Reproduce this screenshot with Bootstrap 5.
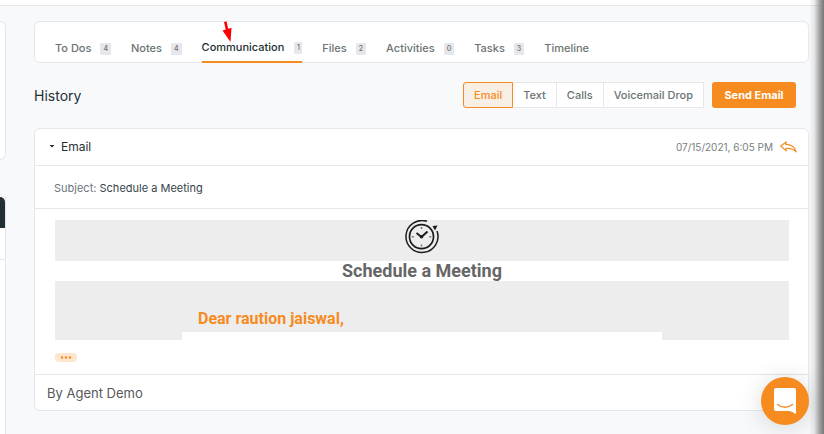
<!DOCTYPE html>
<html lang="en">
<head>
<meta charset="utf-8">
<meta name="viewport" content="width=device-width, initial-scale=1">
<title>Communication history</title>
<link href="https://cdn.jsdelivr.net/npm/bootstrap@5.3.0/dist/css/bootstrap.min.css" rel="stylesheet">
<style>
  :root { --line: #e6e7eb; --accent: #f68b1f; --ink: #1f2f34; --muted-ink: #6b7475; }
  body { font-family: Inter, "Liberation Sans", sans-serif; font-size: 11px; line-height: 16px; color: var(--ink); background: #f8f9fb; overflow: hidden; }
  .app { min-height: 100vh; }
  .topbar { height: 6px; border-bottom: 1px solid var(--line); }
  .side { width: 6px; padding-top: 15px; }
  .side-card { height: 139px; border: 1px solid var(--line); border-left: 0; border-radius: 0 6px 6px 0; }
  .side-panel { margin-top: 37px; border-right: 1px solid var(--line); }
  .side-head { height: 31px; background: #222f35; border-radius: 0 6px 0 0; }
  .side-row { height: 32px; border-bottom: 1px solid var(--line); }
  .main { margin: 0 15px 0 28px; padding-top: 15px; min-width: 0; }
  .panel { background: #fff; border: 1px solid var(--line); border-radius: 6px; }
  .tabs { height: 42px; padding-left: 20px; gap: 20px; }
  .tabs a { color: var(--muted-ink); font-weight: 500; gap: 9px; padding-bottom: 7px; margin-bottom: -1px; white-space: nowrap; }
  .tabs a.active { color: var(--ink); gap: 10px; border-bottom: 2px solid var(--accent); padding-bottom: 6px; }
  .count { min-width: 10px; height: 12px; padding: 0 3px; font-size: 7px; line-height: 12px; background: #e6e7eb; border-radius: 1px; color: var(--muted-ink); margin-top: 3px; }
  .active .count { padding: 0 2px; min-width: 8px; }
  .actions { margin-top: 19px; padding-right: 13px; }
  .title { font-size: 14px; line-height: 20px; font-weight: 400; padding-top: 1px; }
  .seg .btn, .send { height: 26px; padding: 0 10px; font-size: 11px; line-height: 16px; font-weight: 500; border-radius: 3px; white-space: nowrap; }
  .seg .btn { color: var(--muted-ink); background: #fff; border: 1px solid var(--line); }
  .seg .btn.active { color: var(--accent); background: #f8efe4; border-color: var(--accent); }
  .seg .btn:last-child { border-radius: 0; }
  .send.btn { min-width: 84px; margin-left: 8px; padding: 0 12px; color: #fff; font-weight: 700; background: var(--accent); border: 0; }
  .mail { margin-top: 20px; }
  .mail-head { height: 37px; padding: 0 11px 0 14px; border-bottom: 1px solid var(--line); }
  .toggle { font-size: 12px; color: var(--ink); gap: 6px; }
  .stamp { font-size: 10px; color: #777e80; gap: 7px; }
  .subject { height: 43px; padding: 2px 19px 0; border-bottom: 1px solid var(--line); color: #35454a; }
  .mail-body { padding: 11px 19px 12px 20px; border-bottom: 1px solid var(--line); }
  .band { background: #ededed; }
  .letter-logo { height: 41px; }
  .letter-title { font: 700 18px/20px Roboto, sans-serif; color: #666; }
  .letter { height: 59px; }
  .letter-col { width: 66%; max-width: 480px; }
  .greeting { font: 700 16px/20px Roboto, sans-serif; color: var(--accent); padding: 28px 16px 3px; }
  .more { width: 22px; height: 9px; margin-top: 13px; background: #fee5cd; border-radius: 4px; }
  .mail-foot { height: 35px; padding: 0 12px; font-size: 13px; color: #58595b; }
  .edge { width: 15px; background: linear-gradient(90deg, rgba(119,119,119,0) 0, rgba(119,119,119,.15) 35%, rgba(119,119,119,.65) 70%, #777 100%); z-index: 3; }
  .pointer { left: 221px; top: 21px; z-index: 4; }
  .chat { right: 15px; bottom: 9px; width: 48px; height: 48px; background: var(--accent); box-shadow: 0 2px 24px rgba(0,0,0,.15); z-index: 5; }
</style>
</head>
<body>
<div class="app d-flex flex-column position-relative">
  <header class="topbar bg-white"></header>
  <div class="d-flex flex-grow-1">
    <aside class="side d-flex flex-column flex-shrink-0">
      <div class="side-card bg-white"></div>
      <div class="side-panel bg-white flex-grow-1">
        <div class="side-head"></div>
        <div class="side-row"></div>
      </div>
    </aside>
    <main class="main flex-grow-1">
      <nav class="panel tabs d-flex align-items-end" aria-label="Record sections">
        <a href="#" class="d-flex text-decoration-none">To Dos <span class="count text-center">4</span></a>
        <a href="#" class="d-flex text-decoration-none">Notes <span class="count text-center">4</span></a>
        <a href="#" class="active d-flex text-decoration-none" aria-current="page">Communication <span class="count text-center">1</span></a>
        <a href="#" class="d-flex text-decoration-none">Files <span class="count text-center">2</span></a>
        <a href="#" class="d-flex text-decoration-none">Activities <span class="count text-center">0</span></a>
        <a href="#" class="d-flex text-decoration-none">Tasks <span class="count text-center">3</span></a>
        <a href="#" class="d-flex text-decoration-none">Timeline</a>
      </nav>
      <div class="actions d-flex align-items-center">
        <h1 class="title mb-0 me-auto">History</h1>
        <div class="seg btn-group" role="group" aria-label="Channel">
          <button type="button" class="btn active" aria-pressed="true">Email</button>
          <button type="button" class="btn">Text</button>
          <button type="button" class="btn">Calls</button>
          <button type="button" class="btn">Voicemail Drop</button>
        </div>
        <button type="button" class="btn send">Send Email</button>
      </div>
      <article class="panel mail">
        <header class="mail-head d-flex align-items-center justify-content-between">
          <button type="button" class="toggle btn p-0 border-0 d-flex align-items-center" aria-expanded="true">
            <svg width="6" height="6" viewBox="0 0 6 6" aria-hidden="true"><path d="M.5 1h5L3 3.500z" fill="#1f2f34"/></svg>
            Email
          </button>
          <div class="stamp d-flex align-items-center">
            <time datetime="2021-07-15T18:05">07/15/2021, 6:05 PM</time>
            <button type="button" class="btn p-0 border-0 d-flex" aria-label="Reply">
              <svg width="17" height="12" viewBox="0 0 17 12" fill="none" stroke="#f68b1f" stroke-width="1.200" stroke-linejoin="round"><path d="M.7 5 6.300.9 5.800 3.300C10.500 3.300 14.800 5.900 16.300 10.900 13.300 8.100 9.500 7.200 5.800 7.500L6.300 9.900Z"/></svg>
            </button>
          </div>
        </header>
        <div class="subject d-flex align-items-center"><span><span class="text-secondary">Subject:</span> Schedule a Meeting</span></div>
        <div class="mail-body">
          <div class="band letter-logo d-flex justify-content-center">
            <svg width="34" height="34" viewBox="0 0 34 34" fill="none" stroke="#1c1c1c" aria-hidden="true">
              <path d="M22 1.300A16 16 0 1 0 32 11" stroke-width="1.500"/>
              <path d="M27.500 6 32.500 5.500 30 10.500Z" fill="#1c1c1c" stroke="none"/>
              <circle cx="16.500" cy="16.700" r="12" stroke-width="1.700"/>
              <path d="M11.500 13 16.500 17 22.500 11.500" stroke-width="2"/>
              <circle cx="16.500" cy="16.800" r="1.800" fill="#1c1c1c" stroke="none"/>
              <path d="M16.500 7v2M16.500 24.500v2M6.800 16.800h2M24.300 16.800h2" stroke="#777" stroke-width="1.500"/>
            </svg>
          </div>
          <h2 class="letter-title text-center mb-0">Schedule a Meeting</h2>
          <div class="band letter d-flex justify-content-center">
            <div class="letter-col d-flex flex-column">
              <p class="greeting mb-0">Dear raution jaiswal,</p>
              <div class="bg-white flex-grow-1"></div>
            </div>
          </div>
          <button type="button" class="more btn p-0 border-0 d-flex justify-content-center align-items-center" aria-label="Show more">
            <svg width="12" height="4" viewBox="0 0 12 4" fill="#f68b1f"><circle cx="2" cy="1.500" r="1.200"/><circle cx="6" cy="1.500" r="1.200"/><circle cx="10" cy="1.500" r="1.200"/></svg>
          </button>
        </div>
        <footer class="mail-foot d-flex align-items-center">By Agent Demo</footer>
      </article>
    </main>
  </div>
  <div class="edge position-absolute top-0 end-0 bottom-0"></div>
  <svg class="pointer position-absolute" width="12" height="22" viewBox="0 0 12 22" fill="#f00" aria-hidden="true"><path d="M3 1 5.500.3 7.200 7.800 10.500 6.800 9.500 21 1.500 9.500 4.700 8.500Z"/></svg>
  <button type="button" class="chat btn p-0 border-0 rounded-circle position-absolute d-flex align-items-center justify-content-center" aria-label="Open chat">
    <svg width="22" height="26" viewBox="0 0 22 26"><path d="M2 0H20Q22 0 22 2V26Q18 23.500 15 23H2Q0 23 0 21V2Q0 0 2 0Z" fill="#fff"/><path d="M3.500 16.500Q11 22 18.500 16.500" fill="none" stroke="#f68b1f" stroke-width="1.500" stroke-linecap="round"/></svg>
  </button>
</div>
<script src="https://cdn.jsdelivr.net/npm/bootstrap@5.3.0/dist/js/bootstrap.bundle.min.js"></script>
</body>
</html>
